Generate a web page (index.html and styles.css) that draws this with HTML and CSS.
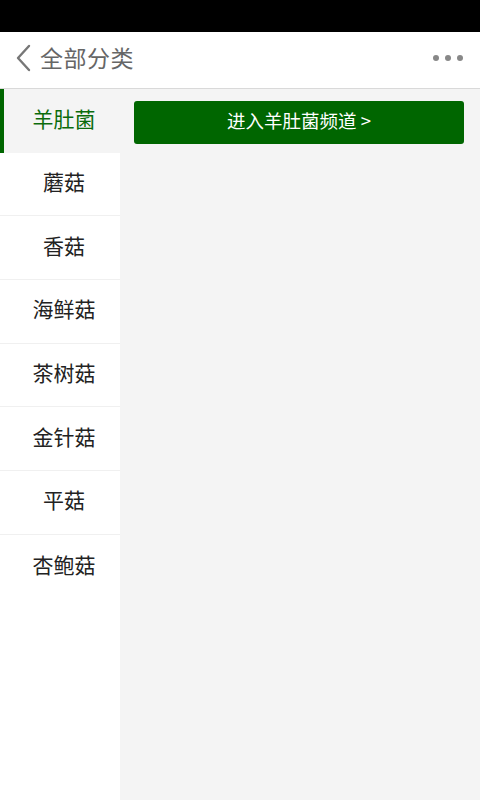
FILE: index.html
```html
<!DOCTYPE html>
<html lang="zh">
<head>
<meta charset="utf-8">
<link rel="stylesheet" href="styles.css">
</head>
<body>
<div class="statusbar"></div>
<header class="topbar">
  <div class="back">
    <svg width="18" height="28" viewBox="0 0 18 28"><path d="M15 2 L4 14 L15 26" fill="none" stroke="#777" stroke-width="2.4" stroke-linecap="round" stroke-linejoin="round"/></svg>
    <span class="title">全部分类</span>
  </div>
  <div class="more"><span></span><span></span><span></span></div>
</header>
<main class="content">
  <nav class="sidebar">
    <div class="item active">羊肚菌</div>
    <div class="item">蘑菇</div>
    <div class="item">香菇</div>
    <div class="item">海鲜菇</div>
    <div class="item">茶树菇</div>
    <div class="item">金针菇</div>
    <div class="item">平菇</div>
    <div class="item last">杏鲍菇</div>
  </nav>
  <section class="panel">
    <a class="channel">进入羊肚菌频道 &gt;</a>
  </section>
</main>
</body>
</html>
```
FILE: styles.css
```css
* { box-sizing: border-box; }
html, body { margin: 0; padding: 0; height: 100%; }
body {
  width: 480px;
  height: 800px;
  display: flex;
  flex-direction: column;
  font-family: "Noto Sans CJK SC", "Noto Sans", sans-serif;
  background: #fff;
  overflow: hidden;
}
.statusbar { height: 32px; background: #000; flex: none; }
.topbar {
  height: 57px;
  flex: none;
  display: flex;
  align-items: center;
  justify-content: space-between;
  background: #fff;
  border-bottom: 1px solid #d9d9d9;
  padding: 0 17px 5px 14px;
}
.back { display: flex; align-items: center; gap: 8px; }
.title { font-size: 23px; color: #666; letter-spacing: 0.5px; line-height: 1; padding-bottom: 1px; }
.more { display: flex; gap: 6px; }
.more span { width: 6px; height: 6px; border-radius: 50%; background: #888; }
.content { flex: 1; display: flex; background: #f4f4f4; }
.sidebar { width: 120px; flex: none; background: #fff; }
.item {
  height: 63.7px;
  display: flex;
  align-items: center;
  justify-content: center;
  padding: 0 0 6px 8px;
  font-size: 21px;
  color: #222;
  border-bottom: 1px solid #f0f0f0;
}
.item.last { border-bottom: none; }
.item.active {
  background: #f4f4f4;
  color: #0b6b0b;
  border-left: 4px solid #006600;
  border-bottom: none;
  padding-left: 4px;
}
.panel { flex: 1; padding: 12px 16px 0 14px; }
.channel {
  display: flex;
  align-items: center;
  justify-content: center;
  height: 43px;
  padding-bottom: 5px;
  background: #006600;
  color: #fff;
  border-radius: 3px;
  font-size: 18.5px;
}
```
